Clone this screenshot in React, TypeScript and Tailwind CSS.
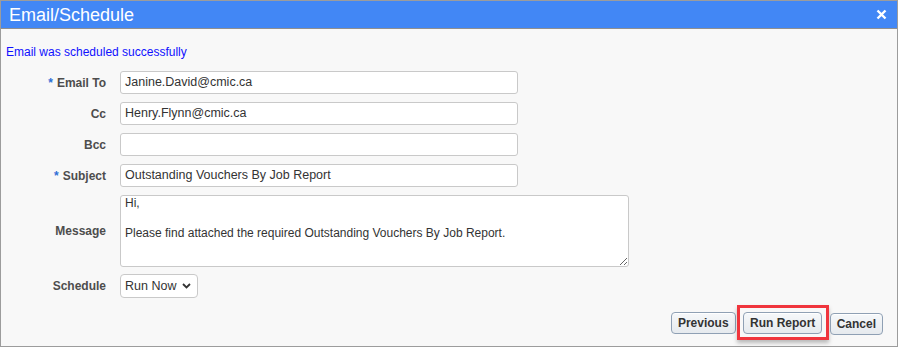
import React from "react";

const font = { fontFamily: '"Liberation Sans", Arial, sans-serif' };

function Label({ text, required }: { text: string; required?: boolean }) {
  return (
    <div className="w-[105px] shrink-0 text-right text-[12px] font-bold text-[#4d4d4d]">
      {required && <span className="mr-[4px] text-[#2f6fd6]">*</span>}
      {text}
    </div>
  );
}

function TextInput({ value }: { value: string }) {
  return (
    <div className="ml-[14px] flex h-[23px] w-[398px] items-center rounded-[3px] border border-[#c9c9c9] bg-white px-[4px] text-[12.5px] text-[#333]">
      {value}
    </div>
  );
}

function Btn({ children }: { children: React.ReactNode }) {
  return (
    <button className="h-[22px] rounded-[4px] border border-[#8fa0b4] bg-gradient-to-b from-[#f6f8fa] to-[#e6eaee] px-[6px] text-[12px] font-bold text-[#333] shadow-[inset_0_1px_0_#fff]">
      {children}
    </button>
  );
}

export default function App() {
  return (
    <div style={font} className="h-[347px] w-[898px] border border-[#9c9c9c] bg-[#f8f8f8]">
      <div className="flex h-[28px] items-center justify-between border-b border-[#8f8f8f] bg-[#4287f5] pl-[8px] pr-[10px]">
        <span className="text-[18px] leading-none text-white">Email/Schedule</span>
        <svg width="11" height="11" viewBox="0 0 11 11">
          <path d="M1.5 1.5 L9.5 9.5 M9.5 1.5 L1.5 9.5" stroke="#fff" strokeWidth="2.4" />
        </svg>
      </div>

      <div className="pl-[5px] pt-[16px] text-[12px] leading-[14px] text-[#1010ff]">
        Email was scheduled successfully
      </div>

      <div className="mt-[12px] flex flex-col gap-[8px]">
        <div className="flex items-center">
          <Label text="Email To" required />
          <TextInput value="Janine.David@cmic.ca" />
        </div>
        <div className="flex items-center">
          <Label text="Cc" />
          <TextInput value="Henry.Flynn@cmic.ca" />
        </div>
        <div className="flex items-center">
          <Label text="Bcc" />
          <TextInput value="" />
        </div>
        <div className="flex items-center">
          <Label text="Subject" required />
          <TextInput value="Outstanding Vouchers By Job Report" />
        </div>
        <div className="flex items-center">
          <Label text="Message" />
          <textarea
            readOnly
            defaultValue={"Hi,\n\nPlease find attached the required Outstanding Vouchers By Job Report."}
            className="ml-[14px] h-[72px] w-[509px] rounded-[3px] border border-[#c9c9c9] bg-white px-[4px] py-0 text-[12px] leading-[15px] text-[#333] outline-none"
          />
        </div>
        <div className="-mt-[1px] flex items-center">
          <Label text="Schedule" />
          <div className="ml-[14px] flex h-[24px] w-[78px] items-center justify-between rounded-[4px] border border-[#c9c9c9] bg-white pl-[4px] pr-[6px] text-[12.5px] text-[#333]">
            <span>Run Now</span>
            <svg width="9" height="6" viewBox="0 0 9 6">
              <path d="M1 1 L4.5 4.5 L8 1" fill="none" stroke="#333" strokeWidth="1.8" />
            </svg>
          </div>
        </div>
      </div>

      <div className="mt-[7px] flex items-center justify-end pr-[14px]">
        <Btn>Previous</Btn>
        <div className="ml-[1px] flex h-[35px] w-[92px] items-center justify-center border-[3px] border-[#f0353d] shadow-[0_3px_4px_rgba(0,0,0,0.25)]">
          <Btn>Run Report</Btn>
        </div>
        <div className="ml-[1px]">
          <Btn>Cancel</Btn>
        </div>
      </div>
    </div>
  );
}
